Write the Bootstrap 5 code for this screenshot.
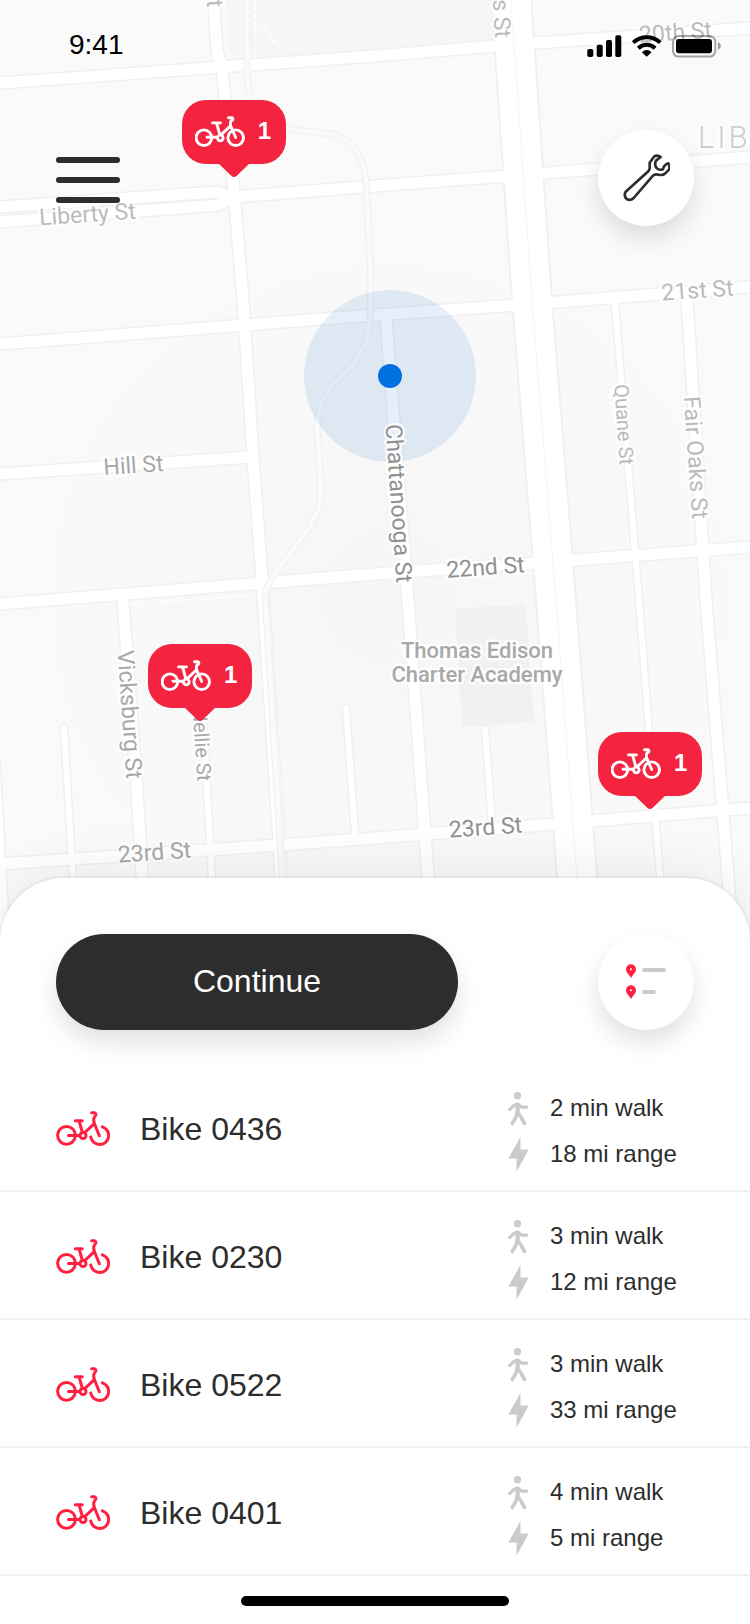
<!DOCTYPE html>
<html lang="en">
<head>
<meta charset="utf-8">
<meta name="viewport" content="width=device-width, initial-scale=1">
<title>Bikes nearby</title>
<link href="https://cdn.jsdelivr.net/npm/bootstrap@5.3.0/dist/css/bootstrap.min.css" rel="stylesheet">
<style>
  body { font-family: "Liberation Sans", Arial, sans-serif; color: #2d2d2d; background: #fff; overflow-x: hidden; }
  .map-canvas { width: 100%; height: auto; }

  /* map drawing */
  .road-edge { fill: none; stroke: #f0f0f0; stroke-linecap: round; stroke-linejoin: round; }
  .road-fill { fill: none; stroke: #fff; stroke-linecap: round; stroke-linejoin: round; }
  .w-lane { stroke-width: 6; } .w-street { stroke-width: 11; } .w-avenue { stroke-width: 38; }
  .edges .w-lane { stroke-width: 8; }
  .map-label { font-family: Roboto, sans-serif; font-size: 23px; text-anchor: middle; paint-order: stroke; stroke: #fff; stroke-opacity: .8; stroke-width: 5px; stroke-linejoin: round; }
  .map-label .minor { font-size: 20px; }
  .map-label .area { font-size: 31px; font-weight: 300; letter-spacing: 3px; text-anchor: start; }
  .map-label .place { font-size: 22px; font-weight: 500; }

  /* controls over the map */
  .status-bar { padding: 28px 28px 0 69px; font-size: 28px; line-height: 34px; color: #000; }
  .map-tools { padding: 68px 56px 0; }
  .menu-btn { gap: 14px; }
  .menu-line { width: 64px; height: 6px; border-radius: 3px; background: #2d2d2d; }
  .round-btn { width: 96px; height: 96px; background: #fff; box-shadow: 0 12px 24px rgba(0, 0, 0, .12); }
  .round-btn:hover { background: #f8f8f8; }

  .bike-pin { width: 104px; height: 64px; border-radius: 24px; background: #f42441; color: #fff; font-size: 24px; line-height: 28px; padding: 0 15px 2px 13px; transform: translateX(-50%); }
  .bike-pin .tail { top: 63px; left: 36px; }
  .pin-north { left: 31.2%; top: 10.6%; }
  .pin-west { left: 26.7%; top: 68.4%; }
  .pin-east { left: 86.7%; top: 77.7%; }

  /* bottom sheet */
  .sheet { margin-top: -64px; border-radius: 64px 64px 0 0; background: #fff; box-shadow: 0 0 0 2px rgba(0, 0, 0, .04), 0 0 60px rgba(0, 0, 0, .09); }
  .sheet-actions { padding: 56px 56px 34px; }
  .continue-btn { width: 63%; height: 96px; padding: 0 0 2px; font-size: 32px; line-height: 40px; color: #fff; background: #2d2d2d; box-shadow: 0 12px 24px rgba(0, 0, 0, .12); }
  .continue-btn:hover { color: #fff; background: #3a3a3a; }
  .bike-row { padding: 21px 56px 13px; border-bottom: 2px solid #f1f1f1; }
  .bike-icon { color: #ff2041; margin-right: 30px; }
  .bike-name { font-size: 32px; line-height: 40px; font-weight: 400; }
  .bike-facts { width: 186px; font-size: 24px; line-height: 46px; }
  .fact-icon { color: #cbcbcb; margin-right: 21px; }
  .home-bar { padding: 20px 0 18px; }
  .home-bar span { width: 268px; height: 10px; background: #000; }
</style>
</head>
<body>

<svg class="d-none" aria-hidden="true">
  <symbol id="bike-small" viewBox="0 0 50 34">
    <g fill="none" stroke="currentColor" stroke-width="2.9" stroke-linecap="round" stroke-linejoin="round">
      <circle cx="8.9" cy="23.7" r="7.8"/><circle cx="40.7" cy="23.7" r="7.8"/><circle cx="25.3" cy="23.9" r="2.8"/>
      <path d="M12 23.3H22M17.6 8.9H25.4M21.7 9.5L24.8 20.6M26.600 20.4L35.3 12M33.500 3.8H36.600Q38.400 4 37.600 5.800L35.600 7.500 35.400 11.400 40.700 23.500"/>
    </g>
  </symbol>
  <symbol id="bike" viewBox="0 2 54 36">
    <g fill="none" stroke="currentColor" stroke-width="3" stroke-linecap="round" stroke-linejoin="round">
      <circle cx="10.5" cy="26.3" r="8.9"/><circle cx="27" cy="26.5" r="3"/>
      <path d="M12.5 26.4H23.6M19.3 11.7H26.2M23.2 12.2L26.2 23M29 23.4L37.8 15.2M35.6 3.7H38.2Q40.6 4.3 39.6 6.4 38 8.6 37.6 10.4L38.2 14 43.3 26.8M46.3 17.9A9 9 0 1 1 34.8 28"/>
    </g>
  </symbol>
  <symbol id="walk" viewBox="53 28 64 104">
    <circle cx="82" cy="41" r="11" fill="currentColor"/>
    <path d="M58 83L71 71 82 66 95 76 110 76" fill="none" stroke="currentColor" stroke-width="10" stroke-linecap="round" stroke-linejoin="round"/>
    <path d="M76 67H88L89 97H76Z" fill="currentColor"/>
    <path d="M82 92Q78 108 66 126M83 92Q94 106 103 126" fill="none" stroke="currentColor" stroke-width="11" stroke-linecap="round"/>
  </symbol>
  <symbol id="bolt" viewBox="53 169 62 106">
    <path d="M90 169L53 234H78V274L115 207H90Z" fill="currentColor"/>
  </symbol>
</svg>

<main>
  <section class="position-relative" aria-label="Map">
    <svg class="map-canvas d-block" viewBox="0 0 750 942" role="img" aria-label="Street map around Chattanooga St">
      <defs>
        <radialGradient id="land" gradientUnits="userSpaceOnUse" cx="390" cy="600" r="430">
          <stop offset="0" stop-color="#f6f6f6"/><stop offset="1" stop-color="#fafafa"/>
        </radialGradient>
        <path id="lanes" d="M615 303L639 600 660 877 664 930M202 700L207 790 212 880M64 728L73 880M346 708L355 833M485 729L492 823"/>
        <g id="streets">
          <path d="M0 83L222 67 375 56 495 46 750 28"/>
          <path d="M0 207L217 192 233 197 218 205 0 222"/>
          <path d="M233 197L375 186 507 176 750 157"/>
          <path d="M0 344L245 325 375 315 518 305 750 287"/>
          <path d="M0 474L251 457"/>
          <path d="M0 604L262 583 375 574 535 563 750 547"/>
          <path d="M0 864L280 845 375 838 555 824 750 808"/>
          <path d="M213 -10L217 52 222 67 233 180 243 300 253 457 262 577 282 890"/>
          <path d="M386 320L408 600 429 890M687 300L706 600 728 877 732 930M123 602L137 790 143 890M-6 760L4 942"/>
        </g>
        <path id="avenue" d="M510 -20L532 300 556 600 578 890"/>
        <path id="rail" d="M247 0V75Q249 105 262 120 272 128 290 129L332 134Q362 143 366 180L371 280 370 322 366 343 353 365 331 386 320 405 317 427 321 487 320 505 310 527 272 577 265 592 283 890"/>
      </defs>
      <rect width="750" height="942" fill="url(#land)"/>
      <path d="M226 0H490L494 46 230 64Z" fill="#f6f6f6"/>
      <path d="M455 609L526 604 534 722 462 727Z" fill="#f1f1f1"/>
      <g class="road-edge">
        <use href="#lanes" stroke-width="9"/><use href="#streets" stroke-width="14"/><use href="#avenue" stroke-width="42"/>
      </g>
      <g class="road-fill">
        <use href="#lanes" stroke-width="6"/><use href="#streets" stroke-width="11"/><use href="#avenue" stroke-width="38"/>
      </g>
      <path d="M511 0L532 300 556 600 577 880" fill="none" stroke="#f5f5f5"/>
      <g fill="none" stroke="#fff" stroke-width="2" stroke-dasharray="4 3">
        <path d="M255 0L256 58M234 56H256M258 26Q270 28 276 46M132 604L248 596"/>
      </g>
      <!-- light-rail track -->
      <g fill="none" stroke-linejoin="round">
        <use href="#rail" stroke="#efefef" stroke-width="7"/>
        <use href="#rail" stroke="#fafafa" stroke-width="5"/>
      </g>
      <circle cx="390" cy="376" r="86" fill="#0068c8" fill-opacity=".105"/>
      <circle cx="390" cy="376" r="12" fill="#0070e0"/>
      <g class="map-label">
        <g fill="#bbb">
          <text transform="translate(88 222) rotate(-4)">Liberty St</text>
          <text transform="translate(676 40) rotate(-4)">20th St</text>
          <text transform="translate(698 298) rotate(-4)">21st St</text>
          <text transform="translate(688 458) rotate(86)">Fair Oaks St</text>
          <text class="minor" transform="translate(617 425) rotate(86)">Quane St</text>
          <text transform="translate(207 4) rotate(86)">t</text>
          <text transform="translate(494 19) rotate(86)">s St</text>
        </g>
        <text class="area" fill="#ccc" x="698" y="148">LIB</text>
        <g fill="#a8a8a8">
          <text transform="translate(134 473) rotate(-4)">Hill St</text>
          <text transform="translate(155 860) rotate(-4)">23rd St</text>
          <text transform="translate(122 715) rotate(86)">Vicksburg St</text>
          <text class="minor" transform="translate(195 745) rotate(86)">Nellie St</text>
          <text class="place" x="477" y="658">Thomas Edison</text>
          <text class="place" x="477" y="682">Charter Academy</text>
        </g>
        <g fill="#909090">
          <text transform="translate(391 504) rotate(86)">Chattanooga St</text>
          <text transform="translate(486 575) rotate(-4)">22nd St</text>
          <text transform="translate(486 835) rotate(-4)">23rd St</text>
        </g>
      </g>
    </svg>

    <button type="button" class="bike-pin pin-north btn position-absolute border-0 d-flex align-items-center justify-content-between fw-bold" aria-label="1 bike near Liberty St">
      <svg width="50" height="34" aria-hidden="true"><use href="#bike-small"/></svg><span>1</span>
      <svg class="tail position-absolute" width="32" height="14" viewBox="0 0 32 14" aria-hidden="true"><path d="M0 0H32L18.500 13Q16 15 13.500 13Z" fill="#f42441"/></svg>
    </button>
    <button type="button" class="bike-pin pin-west btn position-absolute border-0 d-flex align-items-center justify-content-between fw-bold" aria-label="1 bike on Nellie St">
      <svg width="50" height="34" aria-hidden="true"><use href="#bike-small"/></svg><span>1</span>
      <svg class="tail position-absolute" width="32" height="14" viewBox="0 0 32 14" aria-hidden="true"><path d="M0 0H32L18.500 13Q16 15 13.500 13Z" fill="#f42441"/></svg>
    </button>
    <button type="button" class="bike-pin pin-east btn position-absolute border-0 d-flex align-items-center justify-content-between fw-bold" aria-label="1 bike on 23rd St">
      <svg width="50" height="34" aria-hidden="true"><use href="#bike-small"/></svg><span>1</span>
      <svg class="tail position-absolute" width="32" height="14" viewBox="0 0 32 14" aria-hidden="true"><path d="M0 0H32L18.500 13Q16 15 13.500 13Z" fill="#f42441"/></svg>
    </button>

    <header class="position-absolute top-0 start-0 w-100">
      <div class="status-bar d-flex justify-content-between align-items-center">
        <span>9:41</span>
        <svg width="135" height="26" viewBox="587 32 135 26" role="img" aria-label="Signal, Wi-Fi and battery full">
          <rect x="587.300" y="49" width="6" height="8" rx="1.800"/><rect x="596.700" y="44.700" width="6" height="12.300" rx="1.800"/><rect x="606" y="40" width="6" height="17" rx="1.800"/><rect x="615.300" y="35.300" width="6" height="21.700" rx="1.800"/>
          <g fill="none" stroke="#000" stroke-width="4">
            <path d="M633.200 42.600A19.500 19.500 0 0 1 660.200 42.600M638.300 48.200A12 12 0 0 1 655.100 48.200"/>
          </g>
          <path d="M641.800 52.200Q646.700 48 651.600 52.200L646.700 56.800Z"/>
          <rect x="673" y="36" width="42.300" height="20.600" rx="5.500" fill="none" stroke="#000" stroke-opacity=".35" stroke-width="2"/>
          <rect x="676" y="39" width="36" height="14.300" rx="3"/>
          <path d="M718 42Q720.800 43.500 720.800 46T718 50Z" fill-opacity=".4"/>
        </svg>
      </div>
      <nav class="map-tools d-flex justify-content-between align-items-center" aria-label="Map tools">
        <button type="button" class="menu-btn btn px-0 pt-1 pb-0 border-0 d-flex flex-column" aria-label="Menu">
          <span class="menu-line"></span><span class="menu-line"></span><span class="menu-line"></span>
        </button>
        <button type="button" class="round-btn btn border-0 rounded-circle p-0 d-flex align-items-center justify-content-center" aria-label="Report a problem">
          <svg width="48" height="48" viewBox="97 101 144 144" aria-hidden="true">
            <path d="M108 214L176 153Q180 149 180 143V127L193 109Q203 102 213 110L199 121Q193 134 201 143 207 151 220 147 222 134 236 129 242 139 238 148L226 160Q218 166 207 163 196 160 190 166L132 233Q123 242 112 237 101 227 108 214Z" fill="none" stroke="#2d2d2d" stroke-width="8" stroke-linejoin="round"/>
          </svg>
        </button>
      </nav>
    </header>
  </section>

  <section class="sheet position-relative" aria-label="Nearby bikes">
    <div class="sheet-actions d-flex justify-content-between align-items-center">
      <button type="button" class="continue-btn btn border-0 rounded-pill">Continue</button>
      <button type="button" class="round-btn btn border-0 rounded-circle p-0 d-flex align-items-center justify-content-center" aria-label="Show as list">
        <svg width="42" height="36" viewBox="0 0 42 36" aria-hidden="true">
          <g fill="#ff2041"><path id="spot" fill-rule="evenodd" d="M6 0.300A5 5 0 0 0 1 5.300C1 8.500 4 10.500 6 14 8 10.500 11 8.500 11 5.300A5 5 0 0 0 6 0.300ZM6 4.200A1 1 0 1 1 6 6.200 1 1 0 0 1 6 4.200Z"/><use href="#spot" y="21"/></g>
          <g fill="#cbcbcb"><rect x="17" y="4" width="24" height="4" rx="2"/><rect x="17" y="26" width="14" height="4" rx="2"/></g>
        </svg>
      </button>
    </div>

    <ul class="list-unstyled mb-0">
      <li class="bike-row d-flex align-items-center">
        <div class="d-flex align-items-center flex-grow-1 pb-1">
          <svg class="bike-icon" width="54" height="36" aria-hidden="true"><use href="#bike"/></svg>
          <h2 class="bike-name mb-0">Bike 0436</h2>
        </div>
        <div class="bike-facts">
          <div class="d-flex align-items-center"><svg class="fact-icon" width="21" height="35" aria-hidden="true"><use href="#walk"/></svg>2 min walk</div>
          <div class="d-flex align-items-center"><svg class="fact-icon" width="21" height="35" aria-hidden="true"><use href="#bolt"/></svg>18 mi range</div>
        </div>
      </li>
      <li class="bike-row d-flex align-items-center">
        <div class="d-flex align-items-center flex-grow-1 pb-1">
          <svg class="bike-icon" width="54" height="36" aria-hidden="true"><use href="#bike"/></svg>
          <h2 class="bike-name mb-0">Bike 0230</h2>
        </div>
        <div class="bike-facts">
          <div class="d-flex align-items-center"><svg class="fact-icon" width="21" height="35" aria-hidden="true"><use href="#walk"/></svg>3 min walk</div>
          <div class="d-flex align-items-center"><svg class="fact-icon" width="21" height="35" aria-hidden="true"><use href="#bolt"/></svg>12 mi range</div>
        </div>
      </li>
      <li class="bike-row d-flex align-items-center">
        <div class="d-flex align-items-center flex-grow-1 pb-1">
          <svg class="bike-icon" width="54" height="36" aria-hidden="true"><use href="#bike"/></svg>
          <h2 class="bike-name mb-0">Bike 0522</h2>
        </div>
        <div class="bike-facts">
          <div class="d-flex align-items-center"><svg class="fact-icon" width="21" height="35" aria-hidden="true"><use href="#walk"/></svg>3 min walk</div>
          <div class="d-flex align-items-center"><svg class="fact-icon" width="21" height="35" aria-hidden="true"><use href="#bolt"/></svg>33 mi range</div>
        </div>
      </li>
      <li class="bike-row d-flex align-items-center">
        <div class="d-flex align-items-center flex-grow-1 pb-1">
          <svg class="bike-icon" width="54" height="36" aria-hidden="true"><use href="#bike"/></svg>
          <h2 class="bike-name mb-0">Bike 0401</h2>
        </div>
        <div class="bike-facts">
          <div class="d-flex align-items-center"><svg class="fact-icon" width="21" height="35" aria-hidden="true"><use href="#walk"/></svg>4 min walk</div>
          <div class="d-flex align-items-center"><svg class="fact-icon" width="21" height="35" aria-hidden="true"><use href="#bolt"/></svg>5 mi range</div>
        </div>
      </li>
    </ul>

    <div class="home-bar d-flex justify-content-center" aria-hidden="true"><span class="rounded-pill"></span></div>
  </section>
</main>

<script src="https://cdn.jsdelivr.net/npm/bootstrap@5.3.0/dist/js/bootstrap.bundle.min.js"></script>
</body>
</html>
